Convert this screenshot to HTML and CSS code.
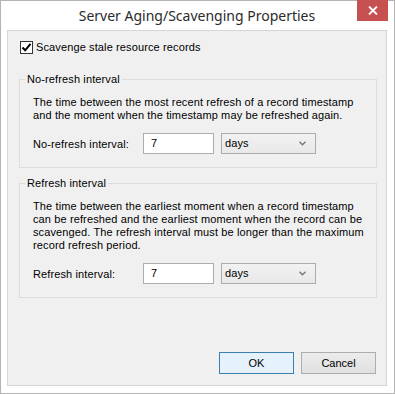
FILE: index.html
```html
<!DOCTYPE html>
<html lang="en">
<head>
    <meta charset="UTF-8">
    <title>Server Aging/Scavenging Properties</title>
    <link rel="stylesheet" href="styles.css">
</head>
<body>

<div class="window">
    <!-- Title bar -->
    <div class="titlebar">
        <span></span>
        <h1 class="title">Server Aging/Scavenging Properties</h1>
        <button type="button" class="close-btn" aria-label="Close">
            <svg width="10" height="9" viewBox="0 0 10 9">
                <path d="M1 0.5 L9 8.5 M9 0.5 L1 8.5" stroke="#fff" stroke-width="1.8" fill="none"/>
            </svg>
        </button>
    </div>

    <div class="client">
        <label class="check">
            <span class="check-box">
                <svg width="11" height="11" viewBox="0 0 11 11">
                    <path d="M1.5 5.5 L4.2 8.3 L9.5 1.8" stroke="#000" stroke-width="2" fill="none"/>
                </svg>
            </span>
            Scavenge stale resource records
        </label>

        <!-- No-refresh section -->
        <fieldset class="group">
            <legend>No-refresh interval</legend>
            <p class="desc">The time between the most recent refresh of a record timestamp and the moment when the timestamp may be refreshed again.</p>
            <div class="row">
                <span class="row-label">No-refresh interval:</span>
                <span class="textbox">7</span>
                <span class="combo">days
                    <svg width="7" height="5" viewBox="0 0 7 5"><path d="M0.5 0.8 L3.5 3.8 L6.5 0.8" stroke="#777" stroke-width="1.4" fill="none"/></svg>
                </span>
            </div>
        </fieldset>

        <!-- Refresh section -->
        <fieldset class="group group-second">
            <legend>Refresh interval</legend>
            <p class="desc">The time between the earliest moment when a record timestamp can be refreshed and the earliest moment when the record can be scavenged. The refresh interval must be longer than the maximum record refresh period.</p>
            <div class="row">
                <span class="row-label">Refresh interval:</span>
                <span class="textbox">7</span>
                <span class="combo">days
                    <svg width="7" height="5" viewBox="0 0 7 5"><path d="M0.5 0.8 L3.5 3.8 L6.5 0.8" stroke="#777" stroke-width="1.4" fill="none"/></svg>
                </span>
            </div>
        </fieldset>

        <div class="buttons">
            <button type="button" class="btn btn-default">OK</button>
            <button type="button" class="btn">Cancel</button>
        </div>
    </div>
</div>

</body>
</html>
```

FILE: styles.css
```css
/* Dialog window */
body {
    margin: 0;
    font-family: "Liberation Sans", Arial, sans-serif;
    font-size: 11px;
    letter-spacing: 0.12px;
    color: #000;
    background: #fff;
}

.window {
    width: 395px;
    height: 394px;
    box-sizing: border-box;
    border: 1px solid #b4b4b4;
    background: #fff;
    padding: 0 7px 7px 6px;
    display: flex;
    flex-direction: column;
}

.titlebar {
    height: 29px;
    display: grid;
    grid-template-columns: 1fr auto 1fr;
    align-items: start;
}

.title {
    margin: 0;
    font-family: "Noto Sans", "Open Sans", sans-serif;
    font-weight: normal;
    font-size: 14px;
    letter-spacing: 0;
    line-height: 30px;
    color: #2b2b2b;
    white-space: nowrap;
}

.close-btn {
    justify-self: end;
    width: 31px;
    height: 21px;
    margin: -1px -1px 0 0;
    padding: 0;
    border: none;
    background-color: #c75050;
    display: flex;
    align-items: center;
    justify-content: center;
}

.client {
    flex: 1;
    border: 1px solid #d5d5d5;
    background-color: #f0f0f0;
    padding: 10px 9px 11px 11px;
    display: flex;
    flex-direction: column;
}

.check {
    display: flex;
    align-items: center;
    gap: 3px;
    height: 13px;
    line-height: 13px;
    margin-left: 1px;
}

.check-box {
    width: 11px;
    height: 11px;
    border: 1px solid #333;
    background: #fff;
    display: flex;
}

.group {
    margin: 19px 0 0 0;
    padding: 10px 12px 13px 13px;
    border: 1px solid #dcdcdc;
    min-width: 0;
}

.group-second {
    margin-top: 9px;
}

.group legend {
    padding: 0 2px;
    margin-left: -8px;
    line-height: 13px;
}

.desc {
    margin: 0;
    line-height: 13px;
}

.row {
    display: flex;
    align-items: center;
    margin-top: 11px;
    height: 21px;
}

.row-label {
    width: 110px;
}

.textbox {
    width: 62px;
    height: 19px;
    line-height: 19px;
    padding-left: 7px;
    border: 1px solid #abadb3;
    background: #fff;
}

.combo {
    margin-left: 7px;
    width: 81px;
    height: 19px;
    line-height: 19px;
    padding: 0 9px 0 3px;
    border: 1px solid #acacac;
    background: linear-gradient(#f2f2f2, #e8e8e8);
    display: flex;
    align-items: center;
    justify-content: space-between;
}

.buttons {
    margin-top: auto;
    display: flex;
    justify-content: flex-end;
    gap: 7px;
    padding-right: 1px;
}

.btn {
    width: 75px;
    height: 22px;
    padding: 0;
    font-family: inherit;
    font-size: 11px;
    color: #000;
    border: 1px solid #adadad;
    background: linear-gradient(#ececec, #e0e0e0);
}

.btn-default {
    border-color: #3c7fb1;
    background: #e5f1fb;
}
```
